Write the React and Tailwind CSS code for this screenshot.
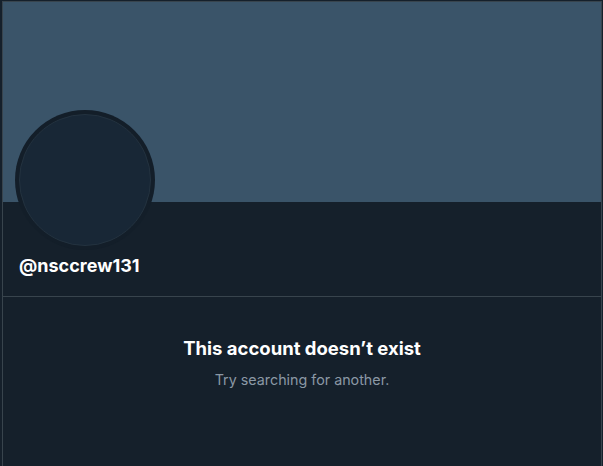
export default function App() {
  return (
    <div className="h-[466px] w-[603px] overflow-hidden bg-[#15202b] pl-[2px] pt-[1px] font-['Inter',sans-serif]">
      <div className="h-[465px] w-[600px] border-l border-r border-t border-[#38444d] bg-[#15202b]">
        <div className="h-[200px] bg-[#3a5469]" />
        <div className="relative px-4">
          <div className="absolute left-[12px] top-[-92px] h-[140px] w-[140px] rounded-full bg-[#131e29] p-[4px]">
            <div className="h-full w-full rounded-full border border-[#23323f] bg-[#182736]" />
          </div>
          <div className="h-[48px]" />
          <div className="pb-[18px] pt-[4px] text-[18px] font-bold leading-[24px] text-white">@nsccrew131</div>
        </div>
        <div className="border-t border-[#38444d]" />
        <div className="flex flex-col items-center pt-[39px]">
          <div className="text-[18.5px] font-bold leading-[24px] text-white">This account doesn’t exist</div>
          <div className="mt-[10px] text-[14.3px] leading-[20px] text-[#8b98a5]">Try searching for another.</div>
        </div>
      </div>
    </div>
  )
}
